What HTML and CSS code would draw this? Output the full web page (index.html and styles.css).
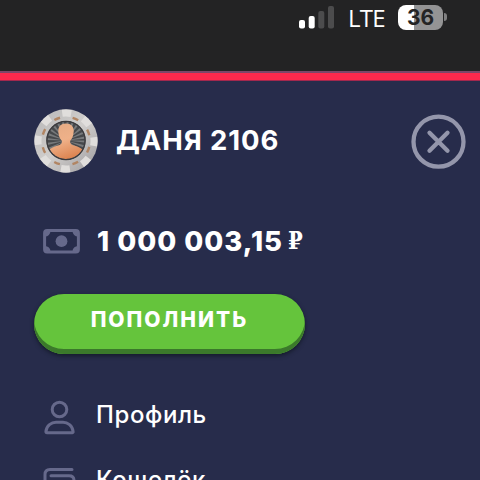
FILE: index.html
```html
<!DOCTYPE html>
<html lang="ru">
<head>
<meta charset="utf-8">
<title>Меню</title>
<link rel="stylesheet" href="styles.css">
</head>
<body>
<header class="status">
  <svg class="signal" width="36" height="23" viewBox="0 0 36 23">
    <rect x="0" y="14" width="6" height="8.5" rx="2" fill="#fff"/>
    <rect x="9.7" y="10" width="6" height="12.5" rx="2" fill="#fff"/>
    <rect x="19.3" y="5" width="6" height="17.5" rx="2" fill="#4c4c4d"/>
    <rect x="29" y="0" width="6" height="22.5" rx="2" fill="#4c4c4d"/>
  </svg>
  <span class="network">LTE</span>
  <span class="battery">36</span>
  <span class="battery-cap"></span>
</header>
<main class="menu">
  <div class="user">
    <svg class="avatar" width="64" height="64" viewBox="0 0 64 64">
      <defs>
        <linearGradient id="rim" x1="0" y1="0" x2="1" y2="1"><stop stop-color="#b7b6b7"/><stop offset=".5" stop-color="#d0cecc"/><stop offset="1" stop-color="#9d9b9e"/></linearGradient>
        <linearGradient id="skin" x1="0" y1="0" x2=".3" y2="1"><stop stop-color="#e4aa83"/><stop offset=".5" stop-color="#efb189"/><stop offset="1" stop-color="#dc814d"/></linearGradient>
        <clipPath id="face"><circle cx="32" cy="31.5" r="18.5"/></clipPath>
      </defs>
      <circle cx="32" cy="32" r="31.7" fill="url(#rim)"/>
      <circle cx="32" cy="32" r="28" fill="none" stroke="#e0dedc" stroke-width="7" stroke-dasharray="9 12.99" stroke-dashoffset="4"/>
      <circle cx="32" cy="32" r="24" fill="none" stroke="#b18563" stroke-width="2.4" stroke-dasharray="6 12.85" stroke-dashoffset="-6"/>
      <circle cx="32" cy="31.5" r="19.5" fill="#46484b"/>
      <g clip-path="url(#face)">
        <circle cx="32" cy="31.5" r="9.5" fill="none" stroke="#77797b" stroke-width="19" stroke-dasharray="1.1 1.39"/>
        <path d="M32 14.500C26.500 14.500 24 18 24.300 22.500C24.500 26.500 25.800 29.800 27.800 31.700C28.300 34 27.200 35.700 23.800 36.600C19.300 37.800 16 39.300 15 42V54H49V42C48 39.300 44.700 37.800 40.200 36.600C36.800 35.700 35.700 34 36.200 31.700C38.200 29.800 39.500 26.500 39.700 22.500C40 18 37.500 14.500 32 14.500z" fill="url(#skin)"/>
      </g>
      <circle cx="32" cy="31.5" r="19.2" fill="none" stroke="#3b3a3d" stroke-width="1.200"/>
    </svg>
    <h1 class="name">ДАНЯ 2106</h1>
    <svg class="close" width="56" height="56" viewBox="0 0 56 56" fill="none" stroke="#9496ab">
      <circle cx="27.500" cy="27.700" r="25" stroke-width="4.300"/>
      <path d="M18.500 18.700 36.500 36.700M36.500 18.700 18.500 36.700" stroke-width="4.300" stroke-linecap="round"/>
    </svg>
  </div>
  <div class="balance">
    <svg width="37" height="25" viewBox="0 0 37 25">
      <rect x="1.600" y="1.600" width="33.800" height="21.300" rx="2.500" fill="none" stroke="#66698b" stroke-width="3"/>
      <path d="M2 2h5.500A5.500 5.500 0 0 1 2 7.500zM35 2h-5.500A5.500 5.500 0 0 0 35 7.500zM2 22.500h5.500A5.500 5.500 0 0 0 2 17zM35 22.500h-5.500A5.500 5.500 0 0 1 35 17z" fill="#66698b"/>
      <circle cx="18.500" cy="12.200" r="5.900" fill="#66698b"/>
    </svg>
    <span class="amount">1 000 003,15</span><span class="ruble">₽</span>
  </div>
  <button class="deposit">ПОПОЛНИТЬ</button>
  <nav class="links">
    <a class="link">
      <svg width="32" height="36" viewBox="0 0 32 36" fill="none" stroke="#66698b" stroke-width="3">
        <circle cx="15.500" cy="9.500" r="7.300"/>
        <path d="M3 32.700H28.500Q29.200 32.700 29.100 31.500C28.500 25.500 23.500 22.300 19 22.300H12C7.500 22.300 2.500 25.500 1.900 31.500Q1.800 32.700 3 32.700z" stroke-linejoin="round"/>
      </svg>
      <span>Профиль</span>
    </a>
    <a class="link">
      <svg width="32" height="36" viewBox="0 0 32 36" fill="none" stroke="#66698b" stroke-width="3" stroke-linecap="round">
        <path d="M28 4.500H6Q1 4.500 1 9.500V28Q1 33 6 33H30V15.500Q30 10.700 25 10.700H7"/>
      </svg>
      <span>Кошелёк</span>
    </a>
  </nav>
</main>
</body>
</html>
```
FILE: styles.css
```css
*, *::before { box-sizing: border-box; }
body {
  margin: 0;
  width: 480px;
  height: 480px;
  overflow: hidden;
  background: #272c4b;
  color: #fff;
  font-family: Inter, "Open Sans", sans-serif;
}
svg { display: block; flex: none; overflow: visible; }
.status {
  display: flex;
  height: 71px;
  padding: 5px 0 0 299px;
  background: #232324;
}
.signal { margin-top: 1px; }
.network {
  width: 50px;
  padding-left: 13px;
  font: 500 24px/26px "Open Sans", sans-serif;
  letter-spacing: -0.7px;
}
.battery {
  width: 45px;
  height: 25px;
  margin-left: 13px;
  border-radius: 8px;
  background: linear-gradient(90deg, #fff 16px, #949495 16px);
  color: #242425;
  font: 700 21px/25px Inter, sans-serif;
  text-align: center;
}
.battery-cap {
  width: 3px;
  height: 8px;
  margin: 8px 0 0 1px;
  border-radius: 0 4px 4px 0;
  background: #808081;
}
.menu {
  position: relative;
  height: 409px;
  overflow: hidden;
  background: #272c4b;
}
.menu::before {
  content: "";
  display: block;
  height: 10px;
  border-top: 2px solid #7c4769;
  border-bottom: 1px solid #a3284e;
  background: #fd294d;
}
.user {
  display: flex;
  align-items: center;
  height: 121px;
  padding: 0 13px 0 34px;
}
.avatar { margin-top: -1px; }
.name {
  flex: 1;
  margin: -3px 0 0 18px;
  font-size: 27.500px;
  line-height: 36px;
  font-weight: 700;
  letter-spacing: 0.9px;
  white-space: nowrap;
}
.balance {
  display: flex;
  align-items: center;
  height: 78px;
  padding-left: 43px;
}
.amount {
  width: 191px;
  margin-left: 17px;
  font-size: 27.500px;
  line-height: 36px;
  font-weight: 800;
  letter-spacing: 1px;
  white-space: nowrap;
}
.ruble { font: 700 25px/36px "DejaVu Serif", serif; transform: scaleX(.85); transform-origin: left; }
.deposit {
  display: block;
  width: 271px;
  height: 60px;
  margin: 14px 0 0 34px;
  padding: 0 0 9px;
  border: 0;
  border-radius: 30px;
  background: #65c43c;
  box-shadow: inset 0 -5px #3b792b, 0 2px 4px #141a2a;
  color: #fff;
  font: 800 21px/51px Inter, sans-serif;
  letter-spacing: 2px;
}
.links { padding-top: 46px; }
.link {
  display: flex;
  height: 65px;
  padding-left: 44px;
  font-size: 24px;
  line-height: 30px;
  font-weight: 500;
  letter-spacing: 0.6px;
}
.link span { margin-left: 20px; }
```
